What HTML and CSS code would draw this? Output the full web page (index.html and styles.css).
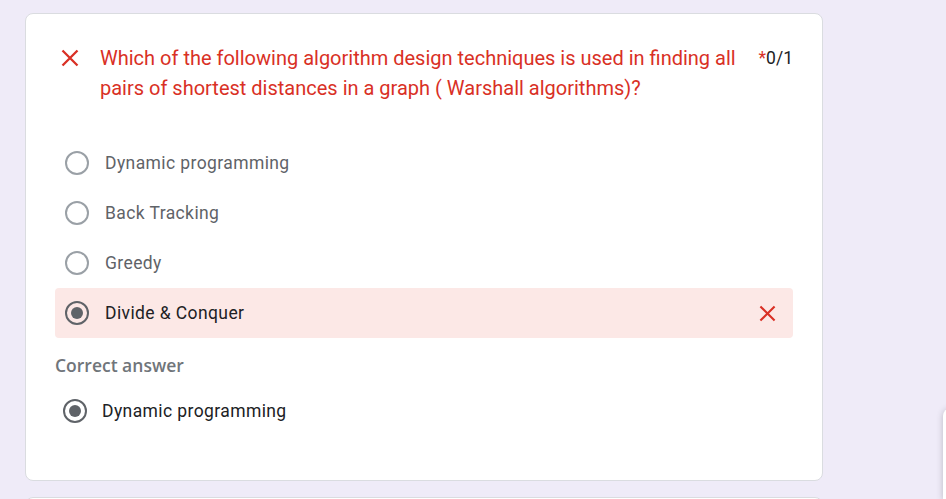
FILE: index.html
```html
<!DOCTYPE html>
<html>
<head>
<meta charset="utf-8">
<link rel="stylesheet" href="styles.css">
</head>
<body>
<div class="page">
  <div class="card">
    <div class="q-head">
      <svg class="x-icon" viewBox="0 0 18 18" width="18" height="18"><path d="M1.5 1.5L16.5 16.5M16.5 1.5L1.5 16.5" stroke="#d93025" stroke-width="2.3" fill="none"/></svg>
      <div class="q-title">Which of the following algorithm design techniques is used in finding all pairs of shortest distances in a graph ( Warshall algorithms)?</div>
      <div class="q-points"><span class="req">*</span>0/1</div>
    </div>
    <div class="options">
      <div class="opt"><span class="radio"></span><span class="opt-text">Dynamic programming</span></div>
      <div class="opt"><span class="radio"></span><span class="opt-text">Back Tracking</span></div>
      <div class="opt"><span class="radio"></span><span class="opt-text">Greedy</span></div>
      <div class="opt opt-wrong"><span class="radio checked"></span><span class="opt-text sel">Divide &amp; Conquer</span>
        <svg class="x-right" viewBox="0 0 18 18" width="17" height="17"><path d="M1.5 1.5L16.5 16.5M16.5 1.5L1.5 16.5" stroke="#d93025" stroke-width="2.2" fill="none"/></svg>
      </div>
    </div>
    <div class="correct-label">Correct answer</div>
    <div class="correct-opt"><span class="radio checked"></span><span class="opt-text sel">Dynamic programming</span></div>
  </div>
  <div class="card next"></div>
</div>
<div class="side-float"></div>
</body>
</html>
```
FILE: styles.css
```css
html, body {
  margin: 0;
  padding: 0;
  height: 499px;
  background: #efebf8;
  font-family: Roboto, "Liberation Sans", sans-serif;
  overflow: hidden;
}
.page {
  padding: 13px 0 0 25px;
  width: 798px;
  height: 486px;
  overflow: hidden;
}
.card {
  background: #fff;
  border: 1px solid #dadce0;
  border-radius: 8px;
  box-sizing: border-box;
  height: 468px;
  padding: 29px 29px 0 29px;
}
.card.next {
  margin-top: 16px;
  height: 40px;
}
.q-head {
  display: flex;
  align-items: flex-start;
}
.x-icon {
  flex: none;
  margin: 6px 0 0 6px;
}
.q-title {
  flex: 1;
  margin-left: 21px;
  color: #d93025;
  font-size: 20px;
  line-height: 30px;
  padding-right: 18px;
}
.q-points {
  flex: none;
  font-size: 17.5px;
  line-height: 30px;
  color: #202124;
}
.req { color: #d93025; }
.options {
  margin-top: 35px;
  display: flex;
  flex-direction: column;
}
.opt {
  height: 50px;
  display: flex;
  align-items: center;
  padding-left: 10px;
  border-radius: 4px;
}
.opt-wrong {
  background: #fce8e6;
  padding-right: 17px;
}
.radio {
  flex: none;
  width: 24px;
  height: 24px;
  box-sizing: border-box;
  border: 2px solid #9aa0a6;
  border-radius: 50%;
  display: flex;
  align-items: center;
  justify-content: center;
}
.radio.checked {
  border-color: #5f6368;
}
.radio.checked::after {
  content: "";
  width: 12px;
  height: 12px;
  border-radius: 50%;
  background: #5f6368;
}
.opt-text {
  margin-left: 16px;
  font-size: 17.5px;
  letter-spacing: 0.4px;
  color: #5f6368;
}
.opt-text.sel { color: #202124; }
.x-right {
  margin-left: auto;
}
.correct-label {
  margin-top: 16px;
  font-family: "Open Sans", Roboto, sans-serif;
  font-size: 17.5px;
  font-weight: 600;
  color: #70757a;
  line-height: 22px;
}
.correct-opt {
  display: flex;
  align-items: center;
  height: 50px;
  margin-top: 10px;
  padding-left: 8px;
}
.correct-opt .opt-text { margin-left: 15px; }
.side-float {
  position: absolute;
  left: 943px;
  top: 408px;
  width: 40px;
  height: 91px;
  background: #fff;
  border-radius: 8px 0 0 0;
  box-shadow: 0 1px 6px rgba(60,64,67,0.3);
}
```
